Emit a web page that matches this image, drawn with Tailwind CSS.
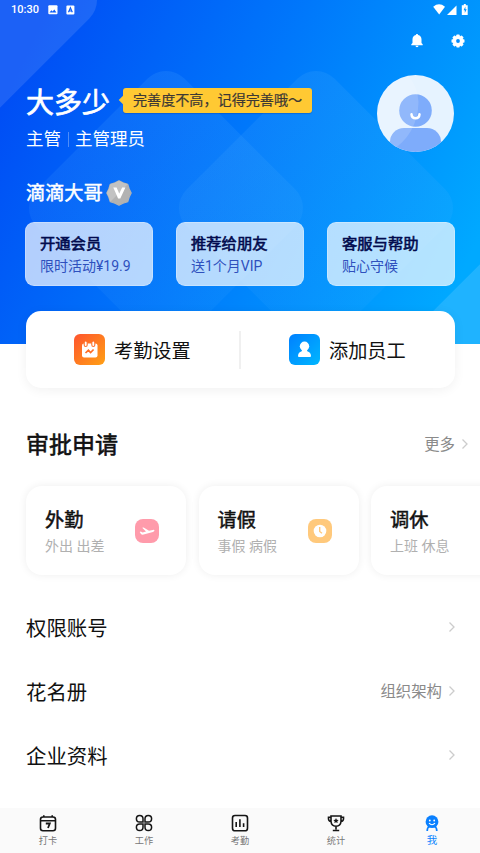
<!DOCTYPE html>
<html lang="zh-CN">
<head>
<meta charset="utf-8">
<title>我</title>
<script src="https://cdn.jsdelivr.net/npm/@tailwindcss/browser@4"></script>
</head>
<body class="font-['Roboto','Noto_Sans_CJK_SC',sans-serif] bg-white">
<div class="w-[480px] h-[853px] flex flex-col overflow-hidden relative text-[#111]">

  <!-- Header -->
  <header class="h-[344px] shrink-0 relative bg-[linear-gradient(116deg,#004ef5_8%,#0078fb_48%,#00a9ff_92%)] text-white">
    <svg class="absolute inset-0" width="480" height="344" viewBox="0 0 480 344">
      <defs><linearGradient id="fade" x1="0" y1="0" x2="1" y2="1"><stop stop-color="#5ab4ff" stop-opacity=".15"/><stop offset="1" stop-color="#5ab4ff" stop-opacity=".07"/></linearGradient></defs>
      <rect x="-144.5" y="-104.5" width="209" height="209" rx="26" transform="rotate(45 -40 0)" fill="#fff" fill-opacity=".11"/>
      <rect x="61.5" y="103.5" width="209" height="209" rx="26" transform="rotate(45 166 208)" fill="url(#fade)"/>
      <rect x="211.500" y="103.5" width="209" height="209" rx="26" transform="rotate(45 316 208)" fill="url(#fade)"/>
      <rect x="440.500" y="242.500" width="209" height="209" rx="26" transform="rotate(45 545 347)" fill="#fff" fill-opacity=".12"/>
    </svg>

    <div class="relative flex flex-col px-[25px]">
      <!-- Status bar -->
      <div class="h-5 -mx-[25px] pl-[11px] pr-[11px] flex items-center">
        <span class="text-[11px] leading-5 font-medium w-[37px] whitespace-nowrap">10:30</span>
        <svg width="10" height="10" viewBox="0 0 10 10"><rect x=".3" y=".3" width="9.200" height="9" rx="1" fill="#fff"/><path d="M1.500 7.600 3.400 5.300 4.600 6.500 6.300 4.500 8.400 7.600Z" fill="#0b5cf8"/></svg>
        <svg class="ml-2" width="9" height="10" viewBox="0 0 9 10"><rect x=".4" y=".4" width="8" height="9" rx="1" fill="#fff"/><path d="M2.500 7.300 4.400 2.700 6.300 7.300M3.200 6H5.600" fill="none" stroke="#0b5cf8" stroke-width="1.200"/></svg>
        <svg class="ml-auto relative -top-px" width="36" height="14" viewBox="0 0 36 14" fill="#fff"><path d="M.2 4.700Q6 0 12 4.700L6.200 12.500Z"/><path d="M23.500 3.500V13H14Z"/><path d="M30.800 2h2v1.200h1.900V13h-5.900V3.200h2Z"/><path d="M32.400 4.600 30.600 8.200h1.200v2.800L33.700 7.300h-1.300Z" fill="#0092ff"/></svg>
      </div>
      <!-- Action icons -->
      <div class="h-[41px] flex justify-end items-center gap-[27px] -mr-[11px]">
        <svg width="12" height="14" viewBox="0 0 12 14" fill="#fff"><path d="M6 0C5.300 0 4.900.4 4.900 1.100 2.800 1.600 1.500 3.200 1.500 5.300V9L.3 10.300V11.200H11.700V10.300L10.500 9V5.300C10.500 3.200 9.200 1.600 7.100 1.100 7.100.4 6.700 0 6 0ZM4.500 11.800a1.500 1.400 0 0 0 3 0Z"/></svg>
        <svg width="16" height="16" viewBox="-8 -8 16 16"><g fill="#fff"><circle r="5.200"/><rect id="tooth" x="-1.700" y="-6.500" width="3.400" height="13" rx=".8"/><use href="#tooth" transform="rotate(45)"/><use href="#tooth" transform="rotate(90)"/><use href="#tooth" transform="rotate(135)"/></g><circle r="1.900" fill="#008cff"/></svg>
      </div>

      <!-- Profile -->
      <div class="h-[91px] pt-[14px] flex justify-between">
        <div>
          <div class="flex items-center pt-[6px]">
            <h1 class="text-[28px] leading-10 w-[98px] pl-px pt-[3px] -mb-[3px] [-webkit-text-stroke:0.7px]">大多少</h1>
            <div class="relative -top-px w-[189px] h-[25px] rounded-[3px] bg-[#ffc933] text-[#3c3835] text-[14.100px] leading-[25px] pl-[10px] whitespace-nowrap shadow-[0_1px_1px_rgba(0,60,160,.35)] [-webkit-text-stroke:0.2px]"><span class="absolute -left-[3px] top-[9px] size-[6px] rotate-45 bg-[#ffc933]"></span>完善度不高，记得完善哦～</div>
          </div>
          <div class="flex items-center text-[17.500px] leading-7 pl-px mt-1">主管<span class="w-px h-[15px] bg-white/30 ml-[7px] mr-[6px]"></span>主管理员</div>
        </div>
        <svg class="mr-px" width="77" height="77" viewBox="0 0 77 77">
          <clipPath id="face"><circle cx="38.500" cy="38.500" r="38.500"/></clipPath>
          <g clip-path="url(#face)"><path d="M0 0H77V77H0Z" fill="#e6f3ff"/>
          <rect x="13" y="53" width="51" height="40" rx="14" fill="#7eacfb"/><circle cx="38.500" cy="35.500" r="16.300" fill="#7eacfb"/>
          <path d="M31 0Q41 13 41.500 27Q41 59 13 77H-5V0Z" fill="#fff" fill-opacity=".15"/></g>
          <path d="M34.500 39.300Q34.800 43.200 38.500 43.200T42.500 39.300" fill="none" stroke="#fff" stroke-width="2.500" stroke-linecap="round"/>
        </svg>
      </div>

      <!-- Company -->
      <div class="h-[70px] pl-px pt-[11px] flex items-center gap-[3px]">
        <span class="text-[19.200px] leading-7 pt-[3px] [-webkit-text-stroke:0.5px]">滴滴大哥</span>
        <svg width="26" height="26" viewBox="0 0 26 26"><path d="M13 .8 17 2.800 21.700 4.300 23.200 9 25.200 13 23.200 17 21.700 21.700 17 23.200 13 25.200 9 23.200 4.300 21.700 2.800 17 .8 13 2.800 9 4.300 4.300 9 2.800Z" fill="#b2b2b2" stroke="#b2b2b2" stroke-width="1.200" stroke-linejoin="round"/><path d="M13 .8 17 2.800 21.700 4.300 4.300 21.700 2.800 17 .8 13 2.800 9 4.300 4.300 9 2.800Z" fill="#c2c2c2"/><path d="M7.300 7.500h3.300l2.600 6 3-6h3.200L14.300 18.500h-2.200Z" fill="#fff"/></svg>
      </div>

      <!-- Shortcuts -->
      <div class="flex justify-between text-[#020b4e]">
        <div class="w-32 h-16 rounded-[9px] bg-white/70 border border-white/25 pl-[14px] pt-[10px]">
          <div class="text-[15.300px] leading-[22px] [-webkit-text-stroke:0.6px]">开通会员</div><div class="text-[14px] leading-[22px] text-[#2e50bd]">限时活动¥19.9</div>
        </div>
        <div class="w-32 h-16 rounded-[9px] bg-white/70 border border-white/25 pl-[14px] pt-[10px]">
          <div class="text-[15.300px] leading-[22px] [-webkit-text-stroke:0.6px]">推荐给朋友</div><div class="text-[14px] leading-[22px] text-[#2e50bd]">送1个月VIP</div>
        </div>
        <div class="w-32 h-16 rounded-[9px] bg-white/70 border border-white/25 pl-[14px] pt-[10px]">
          <div class="text-[15.300px] leading-[22px] [-webkit-text-stroke:0.6px]">客服与帮助</div><div class="text-[14px] leading-[22px] text-[#2e50bd]">贴心守候</div>
        </div>
      </div>
    </div>
  </header>

  <!-- Main actions -->
  <section class="relative -mt-[33px] mx-[26px] w-[428.500px] h-[77px] shrink-0 bg-white rounded-[15px] shadow-[0_2px_12px_rgba(0,0,0,.06)] flex items-center text-[19.200px]">
    <div class="w-[213px] pl-12 flex items-center gap-[9px]">
      <svg width="31" height="31" viewBox="0 0 31 31"><defs><linearGradient id="orange" x2="1" y2="1"><stop stop-color="#ff542e"/><stop offset="1" stop-color="#ffa014"/></linearGradient></defs><rect width="31" height="31" rx="6" fill="url(#orange)"/><rect x="8" y="9.500" width="15.500" height="14" rx="2" fill="#fff"/><g fill="#fff" stroke="#ff702a" stroke-width="1.100"><rect x="10.200" y="7" width="3" height="5.500" rx="1.500"/><rect x="17.800" y="7" width="3" height="5.500" rx="1.500"/></g><path d="m11.500 19 2.900-2.700 2.200 2.200 3-3" fill="none" stroke="#ff6d25" stroke-width="1.700"/></svg>
      <span class="pt-[5px]">考勤设置</span>
    </div>
    <div class="w-[2px] h-[38px] bg-[#f0f0f0]"></div>
    <div class="pl-12 flex items-center gap-[9px]">
      <svg width="31" height="31" viewBox="0 0 31 31"><defs><linearGradient id="blue" x2="1" y2="1"><stop stop-color="#0080ff"/><stop offset="1" stop-color="#00b7ff"/></linearGradient></defs><rect width="31" height="31" rx="6" fill="url(#blue)"/><g fill="#fff"><circle cx="15.500" cy="12.200" r="4.700"/><path d="M13.200 15h4.600l.5 2.200Q22 18.500 22 22 22 23 21 23H10Q9 23 9 22 9 18.500 12.700 17.200Z"/></g></svg>
      <span class="pt-[5px]">添加员工</span>
    </div>
  </section>

  <!-- Approvals -->
  <section class="shrink-0">
    <div class="mt-[36px] h-10 pl-[26px] pr-[11px] flex items-center justify-between">
      <h2 class="text-[23px] pt-1 [-webkit-text-stroke:0.6px]">审批申请</h2>
      <div class="flex items-center gap-[6px] text-[15.400px] text-[#8a8a8a]"><span class="pt-1">更多</span><svg width="8" height="12" viewBox="0 0 8 12"><path d="m1.500 1.500 4.500 4.500-4.500 4.500" fill="none" stroke="#ccc" stroke-width="1.300"/></svg></div>
    </div>
    <div class="mt-[22px] pl-[26px] flex gap-[12.500px]">
      <div class="w-40 h-[89px] shrink-0 rounded-[16px] shadow-[0_0_8px_rgba(0,0,0,.07)] pl-[19px] pr-[27px] flex items-center justify-between">
        <div class="pt-[6px]"><div class="text-[19.200px] leading-[26px] [-webkit-text-stroke:0.5px]">外勤</div><div class="text-[14px] leading-[25px] text-[#b0b0b0]">外出 出差</div></div>
        <svg width="24" height="24" viewBox="0 0 24 24"><rect width="24" height="24" rx="8" fill="#ff9bab"/><path d="M4.700 13 5.800 12.400 7.600 13.500 11 12.600 7.200 8.700 8.600 8.400 14 11.700 17.800 10.900Q19.400 10.700 19.500 11.600 19.400 12.500 17.900 12.900L8.600 15.500Q6.900 16 6 15Z" fill="#fff"/></svg>
      </div>
      <div class="w-40 h-[89px] shrink-0 rounded-[16px] shadow-[0_0_8px_rgba(0,0,0,.07)] pl-[19px] pr-[27px] flex items-center justify-between">
        <div class="pt-[6px]"><div class="text-[19.200px] leading-[26px] [-webkit-text-stroke:0.5px]">请假</div><div class="text-[14px] leading-[25px] text-[#b0b0b0]">事假 病假</div></div>
        <svg width="24" height="24" viewBox="0 0 24 24"><rect width="24" height="24" rx="8" fill="#ffc97c"/><circle cx="12" cy="12" r="6.300" fill="#fff"/><path d="M11.700 8V12.500L14 14.300" fill="none" stroke="#ffc97c" stroke-width="1.400"/></svg>
      </div>
      <div class="w-40 h-[89px] shrink-0 rounded-[16px] shadow-[0_0_8px_rgba(0,0,0,.07)] pl-[19px] flex items-center">
        <div class="pt-[6px]"><div class="text-[19.200px] leading-[26px] [-webkit-text-stroke:0.5px]">调休</div><div class="text-[14px] leading-[25px] text-[#b0b0b0]">上班 休息</div></div>
      </div>
    </div>
  </section>

  <!-- Menu -->
  <section class="mt-[20px] shrink-0 pl-[26px] pr-6 text-[20.400px]">
    <div class="h-16 flex items-center justify-between"><span class="pt-1">权限账号</span><svg width="8" height="12" viewBox="0 0 8 12"><path d="m1.500 1.500 4.500 4.500-4.500 4.500" fill="none" stroke="#ccc" stroke-width="1.300"/></svg></div>
    <div class="h-16 flex items-center justify-between"><span class="pt-1">花名册</span><div class="flex items-center gap-[6px] text-[15.400px] text-[#8a8a8a]"><span class="pt-1">组织架构</span><svg width="8" height="12" viewBox="0 0 8 12"><path d="m1.500 1.500 4.500 4.500-4.500 4.500" fill="none" stroke="#ccc" stroke-width="1.300"/></svg></div></div>
    <div class="h-16 flex items-center justify-between"><span class="pt-1">企业资料</span><svg width="8" height="12" viewBox="0 0 8 12"><path d="m1.500 1.500 4.500 4.500-4.500 4.500" fill="none" stroke="#ccc" stroke-width="1.300"/></svg></div>
  </section>

  <!-- Tab bar -->
  <nav class="mt-auto h-[45px] shrink-0 bg-[#fafafa] grid grid-cols-5 text-[9.200px] leading-[14px] text-[#777] pt-[6px]">
    <div class="flex flex-col items-center gap-[2px]">
      <svg width="18" height="18" viewBox="0 0 18 18" fill="none" stroke="#151515" stroke-width="1.600"><rect x="1.500" y="3" width="15" height="13.700" rx="2.500"/><path d="M1.500 6.800h15M4.800 1.300V3M13.200 1.300V3" /><path d="M6.800 9.500H10.800L9 14" stroke-width="1.800"/></svg><span>打卡</span>
    </div>
    <div class="flex flex-col items-center gap-[2px]">
      <svg width="18" height="18" viewBox="0 0 18 18" fill="none" stroke="#151515" stroke-width="1.500"><path id="petal" d="M8 8H4.700A3.300 3.300 0 1 1 8 4.700Z"/><use href="#petal" transform="rotate(90 9 9)"/><use href="#petal" transform="rotate(180 9 9)"/><use href="#petal" transform="rotate(270 9 9)"/></svg><span>工作</span>
    </div>
    <div class="flex flex-col items-center gap-[2px]">
      <svg width="18" height="18" viewBox="0 0 18 18" fill="none" stroke="#151515" stroke-width="1.600"><path d="M4 16.700H3.200Q1.500 16.500 1.500 14V4Q1.500 1.500 4 1.500H14Q16.500 1.500 16.500 4V14Q16.500 16.500 14.800 16.700H3.500"/><path d="M5.200 8V13M8.900 5.200V13M12.600 9.200V13"/></svg><span>考勤</span>
    </div>
    <div class="flex flex-col items-center gap-[2px]">
      <svg width="18" height="18" viewBox="0 0 18 18" fill="none" stroke="#151515" stroke-width="1.600"><path d="M4 2H14V7.500Q13.600 12 9 12.300 4.400 12 4 7.500ZM4 3.300H1.500V5Q1.700 7.200 4 7.500M14 3.300H16.500V5Q16.300 7.200 14 7.500M9 12.500V15.500M5.800 16.500h6.400"/><path d="m9 4 .8 1.700 1.900.2-1.400 1.300.4 1.900L9 8.200 7.300 9.100l.4-1.900-1.400-1.300 1.900-.2Z" fill="#151515" stroke="none"/></svg><span>统计</span>
    </div>
    <div class="flex flex-col items-center gap-[2px] text-[#0a84ff] text-[10.500px]">
      <svg width="18" height="18" viewBox="0 0 18 18"><circle cx="9" cy="7.700" r="6.400" fill="#0a80ff"/><path d="M4.200 17Q4.200 13.500 6.200 12.800M13.800 17Q13.800 13.500 11.800 12.800" fill="none" stroke="#0a80ff" stroke-width="1.700"/><circle cx="6.800" cy="6.500" r=".9" fill="#fff"/><circle cx="11.200" cy="6.500" r=".9" fill="#fff"/><path d="M6 9.200Q9 12.300 12 9.200" fill="none" stroke="#fff" stroke-width="1.200"/></svg><span>我</span>
    </div>
  </nav>
</div>
</body>
</html>
